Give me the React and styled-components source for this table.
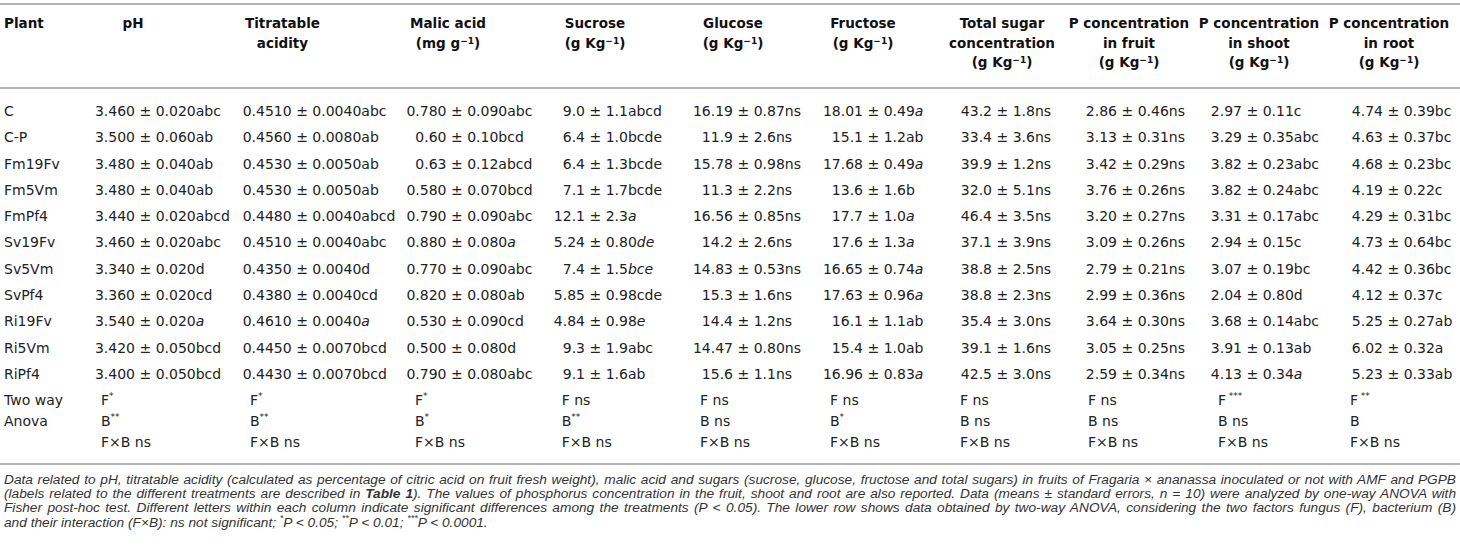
import React from 'react';
import styled, { createGlobalStyle } from 'styled-components';

const GlobalStyle = createGlobalStyle`
  body {
    margin: 0;
    background: #fff;
  }
`;

const RULE = '2px solid #b4b4b4';

const Page = styled.div`
  width: 1460px;
  padding-top: 3px;
  color: #222;
  font-family: "DejaVu Sans", "Liberation Sans", sans-serif;
`;

const Table = styled.table`
  width: 1460px;
  border-collapse: collapse;
  table-layout: fixed;
`;

const HeadCell = styled.th`
  border-top: ${RULE};
  border-bottom: ${RULE};
  padding: 9px ${p => p.$pr || 0}px 14.5px ${p => p.$pl || 0}px;
  font-size: 13.5px;
  line-height: 19.5px;
  font-weight: bold;
  color: #111;
  text-align: ${p => (p.$left ? 'left' : 'center')};
  vertical-align: top;
  white-space: nowrap;
`;

const Cell = styled.td`
  padding: ${p => (p.$first ? 12 : 3.15)}px 0 3.15px ${p => p.$pl || 0}px;
  font-size: 14px;
  line-height: 20px;
  white-space: nowrap;
  vertical-align: top;
`;

const StatCell = styled.td`
  border-bottom: ${RULE};
  padding: 3px 0 9.4px ${p => p.$pl || 0}px;
  font-size: 14px;
  line-height: 21.15px;
  white-space: nowrap;
  vertical-align: top;
`;

const StatLine = styled.div`
  height: 21.15px;
`;

const Num = styled.span`
  display: inline-block;
  width: ${p => p.$w}px;
  text-align: right;
`;

const Letters = styled.span`
  font-style: ${p => (p.$italic ? 'italic' : 'normal')};
`;

const Sup = styled.sup`
  font-size: 9px;
  line-height: 0;
  vertical-align: ${p => (p.$low ? '4px' : '6px')};
`;

const Caption = styled.div`
  margin-top: 7.8px;
  padding: 0 4px;
  font-family: "Liberation Sans", Arial, sans-serif;
  font-style: italic;
  font-size: 13.7px;
  line-height: 14.4px;
  color: #333;
`;

const CapLine = styled.div`
  text-align: justify;
  text-align-last: ${p => (p.$last ? 'left' : 'justify')};
`;

const columns = [
  { width: 75, head: ['Plant'] },
  { width: 161, head: ['pH'], shift: -22.5, num: 60, stat: 26 },
  { width: 164, head: ['Titratable', 'acidity'], shift: -35.5, num: 55.7, stat: 14 },
  { width: 144, head: ['Malic acid', 'mg g'], shift: -24, num: 46.5, stat: 15 },
  { width: 134, head: ['Sucrose', 'g Kg'], shift: -16, num: 41, stat: 17.7 },
  { width: 134, head: ['Glucose', 'g Kg'], shift: -12, num: 55, stat: 22 },
  { width: 127, head: ['Fructose', 'g Kg'], shift: -12.5, num: 51, stat: 18 },
  { width: 120, head: ['Total sugar', 'concentration', 'g Kg'], shift: 3, num: 53, stat: 21 },
  { width: 135, head: ['P concentration', 'in fruit', 'g Kg'], shift: 2.5, num: 58, stat: 29 },
  { width: 130, head: ['P concentration', 'in shoot', 'g Kg'], shift: 0, num: 48, stat: 24 },
  { width: 136, head: ['P concentration', 'in root', 'g Kg'], shift: -3, num: 59, stat: 26 },
];

// italic letter groups are wrapped in underscores
const rows = [
  ['C', '3.460 ± 0.020abc', '0.4510 ± 0.0040abc', '0.780 ± 0.090abc', '9.0 ± 1.1abcd', '16.19 ± 0.87ns', '18.01 ± 0.49_a_', '43.2 ± 1.8ns', '2.86 ± 0.46ns', '2.97 ± 0.11c', '4.74 ± 0.39bc'],
  ['C-P', '3.500 ± 0.060ab', '0.4560 ± 0.0080ab', '0.60 ± 0.10bcd', '6.4 ± 1.0bcde', '11.9 ± 2.6ns', '15.1 ± 1.2ab', '33.4 ± 3.6ns', '3.13 ± 0.31ns', '3.29 ± 0.35abc', '4.63 ± 0.37bc'],
  ['Fm19Fv', '3.480 ± 0.040ab', '0.4530 ± 0.0050ab', '0.63 ± 0.12abcd', '6.4 ± 1.3bcde', '15.78 ± 0.98ns', '17.68 ± 0.49_a_', '39.9 ± 1.2ns', '3.42 ± 0.29ns', '3.82 ± 0.23abc', '4.68 ± 0.23bc'],
  ['Fm5Vm', '3.480 ± 0.040ab', '0.4530 ± 0.0050ab', '0.580 ± 0.070bcd', '7.1 ± 1.7bcde', '11.3 ± 2.2ns', '13.6 ± 1.6b', '32.0 ± 5.1ns', '3.76 ± 0.26ns', '3.82 ± 0.24abc', '4.19 ± 0.22c'],
  ['FmPf4', '3.440 ± 0.020abcd', '0.4480 ± 0.0040abcd', '0.790 ± 0.090abc', '12.1 ± 2.3_a_', '16.56 ± 0.85ns', '17.7 ± 1.0_a_', '46.4 ± 3.5ns', '3.20 ± 0.27ns', '3.31 ± 0.17abc', '4.29 ± 0.31bc'],
  ['Sv19Fv', '3.460 ± 0.020abc', '0.4510 ± 0.0040abc', '0.880 ± 0.080_a_', '5.24 ± 0.80_de_', '14.2 ± 2.6ns', '17.6 ± 1.3_a_', '37.1 ± 3.9ns', '3.09 ± 0.26ns', '2.94 ± 0.15c', '4.73 ± 0.64bc'],
  ['Sv5Vm', '3.340 ± 0.020d', '0.4350 ± 0.0040d', '0.770 ± 0.090abc', '7.4 ± 1.5_bce_', '14.83 ± 0.53ns', '16.65 ± 0.74_a_', '38.8 ± 2.5ns', '2.79 ± 0.21ns', '3.07 ± 0.19bc', '4.42 ± 0.36bc'],
  ['SvPf4', '3.360 ± 0.020cd', '0.4380 ± 0.0040cd', '0.820 ± 0.080ab', '5.85 ± 0.98cde', '15.3 ± 1.6ns', '17.63 ± 0.96_a_', '38.8 ± 2.3ns', '2.99 ± 0.36ns', '2.04 ± 0.80d', '4.12 ± 0.37c'],
  ['Ri19Fv', '3.540 ± 0.020_a_', '0.4610 ± 0.0040_a_', '0.530 ± 0.090cd', '4.84 ± 0.98_e_', '14.4 ± 1.2ns', '16.1 ± 1.1ab', '35.4 ± 3.0ns', '3.64 ± 0.30ns', '3.68 ± 0.14abc', '5.25 ± 0.27ab'],
  ['Ri5Vm', '3.420 ± 0.050bcd', '0.4450 ± 0.0070bcd', '0.500 ± 0.080d', '9.3 ± 1.9abc', '14.47 ± 0.80ns', '15.4 ± 1.0ab', '39.1 ± 1.6ns', '3.05 ± 0.25ns', '3.91 ± 0.13ab', '6.02 ± 0.32a'],
  ['RiPf4', '3.400 ± 0.050bcd', '0.4430 ± 0.0070bcd', '0.790 ± 0.080abc', '9.1 ± 1.6ab', '15.6 ± 1.1ns', '16.96 ± 0.83_a_', '42.5 ± 3.0ns', '2.59 ± 0.34ns', '4.13 ± 0.34_a_', '5.23 ± 0.33ab'],
];

// [fungus, bacterium] for each data column: [letter, stars or 'ns' or '']
const stats = [
  [['F', '*'], ['B', '**']],
  [['F', '*'], ['B', '**']],
  [['F', '*'], ['B', '*']],
  [['F', 'ns'], ['B', '**']],
  [['F', 'ns'], ['B', 'ns']],
  [['F', 'ns'], ['B', '*']],
  [['F', 'ns'], ['B', 'ns']],
  [['F', 'ns'], ['B', 'ns']],
  [['F', ' ***'], ['B', 'ns']],
  [['F', ' **'], ['B', '']],
];

function Value({ text, w }) {
  const [num, rest] = text.split(' ± ');
  const m = rest.match(/^([\d.]+)(_?)([a-z]*)_?$/);
  return (
    <>
      <Num $w={w}>{num}</Num> ± {m[1]}
      <Letters $italic={m[2] === '_'}>{m[3]}</Letters>
    </>
  );
}

function Stat({ pair }) {
  const [letter, mark] = pair;
  if (mark === 'ns') return <StatLine>{letter} ns</StatLine>;
  if (!mark) return <StatLine>{letter}</StatLine>;
  return (
    <StatLine>
      {letter}
      {mark.startsWith(' ') ? '\u2009' : ''}
      <Sup>{mark.trim()}</Sup>
    </StatLine>
  );
}

function Head({ col, index }) {
  const lines = col.head;
  const shift = col.shift || 0;
  const pl = index === 0 ? 4 : shift > 0 ? shift * 2 : 0;
  const pr = shift < 0 ? -shift * 2 : 0;
  return (
    <HeadCell $left={index === 0} $pl={pl} $pr={pr}>
      {lines.map((line, i) => (
        <React.Fragment key={i}>
          {i > 0 && <br />}
          {line === 'mg g' || line === 'g Kg' ? (
            <>
              ({line}
              <Sup $low>−1</Sup>)
            </>
          ) : (
            line
          )}
        </React.Fragment>
      ))}
    </HeadCell>
  );
}

export default function App() {
  return (
    <Page>
      <GlobalStyle />
      <Table>
        <colgroup>
          {columns.map((c, i) => (
            <col key={i} style={{ width: c.width }} />
          ))}
        </colgroup>
        <thead>
          <tr>
            {columns.map((c, i) => (
              <Head key={i} col={c} index={i} />
            ))}
          </tr>
        </thead>
        <tbody>
          {rows.map((row, r) => (
            <tr key={row[0]}>
              <Cell $first={r === 0} $pl={4}>
                {row[0]}
              </Cell>
              {row.slice(1).map((v, i) => (
                <Cell key={i} $first={r === 0}>
                  <Value text={v} w={columns[i + 1].num} />
                </Cell>
              ))}
            </tr>
          ))}
          <tr>
            <StatCell $pl={4}>
              <StatLine>Two way</StatLine>
              <StatLine>Anova</StatLine>
            </StatCell>
            {stats.map((s, i) => (
              <StatCell key={i} $pl={columns[i + 1].stat}>
                <Stat pair={s[0]} />
                <Stat pair={s[1]} />
                <StatLine>F×B ns</StatLine>
              </StatCell>
            ))}
          </tr>
        </tbody>
      </Table>
      <Caption>
        <CapLine>
          Data related to pH, titratable acidity (calculated as percentage of citric acid on fruit fresh weight), malic acid and sugars (sucrose, glucose, fructose and total sugars) in fruits of Fragaria × ananassa inoculated or not with AMF and PGPB
        </CapLine>
        <CapLine>
          (labels related to the different treatments are described in <b>Table 1</b>). The values of phosphorus concentration in the fruit, shoot and root are also reported. Data (means ± standard errors, n = 10) were analyzed by one-way ANOVA with
        </CapLine>
        <CapLine>
          Fisher post-hoc test. Different letters within each column indicate significant differences among the treatments (P &lt; 0.05). The lower row shows data obtained by two-way ANOVA, considering the two factors fungus (F), bacterium (B)
        </CapLine>
        <CapLine $last>
          and their interaction (F×B): ns not significant; <Sup>*</Sup>P &lt; 0.05; <Sup>**</Sup>P &lt; 0.01; <Sup>***</Sup>P &lt; 0.0001.
        </CapLine>
      </Caption>
    </Page>
  );
}
